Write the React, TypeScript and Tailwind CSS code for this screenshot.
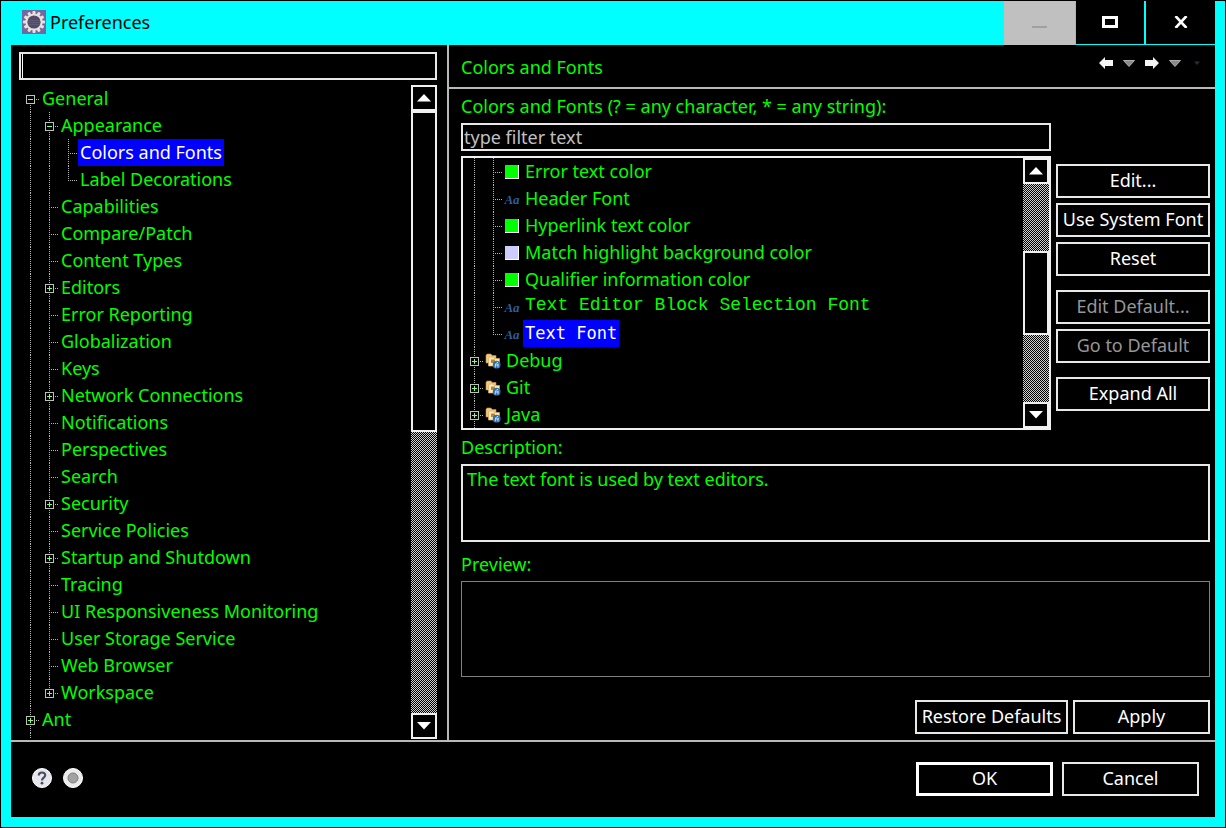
import { useState } from "react";
import type { ReactNode } from "react";

type Guide = "line" | "tee" | "end" | "plus" | "lastPlus" | "minus" | "root";

type TreeItem = {
  label: string;
  guides: Guide[];
};

const topics: TreeItem[] = [
  { label: "General", guides: ["root"] },
  { label: "Appearance", guides: ["line", "minus"] },
  { label: "Colors and Fonts", guides: ["line", "line", "tee"] },
  { label: "Label Decorations", guides: ["line", "line", "end"] },
  { label: "Capabilities", guides: ["line", "tee"] },
  { label: "Compare/Patch", guides: ["line", "tee"] },
  { label: "Content Types", guides: ["line", "tee"] },
  { label: "Editors", guides: ["line", "plus"] },
  { label: "Error Reporting", guides: ["line", "tee"] },
  { label: "Globalization", guides: ["line", "tee"] },
  { label: "Keys", guides: ["line", "tee"] },
  { label: "Network Connections", guides: ["line", "plus"] },
  { label: "Notifications", guides: ["line", "tee"] },
  { label: "Perspectives", guides: ["line", "tee"] },
  { label: "Search", guides: ["line", "tee"] },
  { label: "Security", guides: ["line", "plus"] },
  { label: "Service Policies", guides: ["line", "tee"] },
  { label: "Startup and Shutdown", guides: ["line", "plus"] },
  { label: "Tracing", guides: ["line", "tee"] },
  { label: "UI Responsiveness Monitoring", guides: ["line", "tee"] },
  { label: "User Storage Service", guides: ["line", "tee"] },
  { label: "Web Browser", guides: ["line", "tee"] },
  { label: "Workspace", guides: ["line", "lastPlus"] },
  { label: "Ant", guides: ["plus"] },
];

type FontItem = TreeItem & {
  icon: "green" | "lavender" | "font" | "folder";
  font?: string;
};

const fontItems: FontItem[] = [
  { label: "Error text color", guides: ["line", "tee"], icon: "green" },
  { label: "Header Font", guides: ["line", "tee"], icon: "font" },
  { label: "Hyperlink text color", guides: ["line", "tee"], icon: "green" },
  { label: "Match highlight background color", guides: ["line", "tee"], icon: "lavender" },
  { label: "Qualifier information color", guides: ["line", "tee"], icon: "green" },
  { label: "Text Editor Block Selection Font", guides: ["line", "tee"], icon: "font", font: "font-['Liberation_Mono',monospace] text-[18px] leading-[22px] pb-1" },
  { label: "Text Font", guides: ["line", "end"], icon: "font", font: "font-['DejaVu_Sans_Mono',monospace] text-[17px]" },
  { label: "Debug", guides: ["plus"], icon: "folder" },
  { label: "Git", guides: ["plus"], icon: "folder" },
  { label: "Java", guides: ["plus"], icon: "folder" },
];

function GuideCell({ kind }: { kind: Guide }) {
  const hasPlus = kind === "plus" || kind === "lastPlus";
  const hasBox = hasPlus || kind === "minus" || kind === "root";
  const top = kind === "root" ? 14 : 0;
  const bottom = kind === "end" || kind === "lastPlus" ? 14 : 27;
  return (
    <svg width="19" height="27" viewBox="0 0 19 27" shapeRendering="crispEdges" className="shrink-0" aria-hidden="true">
      <path d={`M9.5 ${top}V${bottom}`} stroke="#b4b4b4" strokeDasharray="1 1" />
      {kind !== "line" && <path d="M9 14.5H19" stroke="#b4b4b4" strokeDasharray="1 1" />}
      {hasBox && (
        <>
          <rect x="5.5" y="10.5" width="8" height="8" fill="#000" stroke="#b8c4b8" />
          <path d="M7 14.5H12" stroke="#7dff7d" />
          {hasPlus && <path d="M9.5 12V17" stroke="#7dff7d" />}
        </>
      )}
    </svg>
  );
}

type TreeRowProps = {
  item: TreeItem;
  selected: boolean;
  onSelect: () => void;
  icon?: ReactNode;
  font?: string;
};

function TreeRow({ item, selected, onSelect, icon, font = "" }: TreeRowProps) {
  return (
    <li role="treeitem" aria-selected={selected} className="flex h-[27px] items-stretch">
      {item.guides.map((kind, i) => (
        <GuideCell key={i} kind={kind} />
      ))}
      {icon && <span className="flex w-5 shrink-0 items-center justify-center pr-0.5">{icon}</span>}
      <button onClick={onSelect} className={`whitespace-nowrap px-0.5 text-left ${font} ${selected ? "bg-[#0000ff] text-white" : "text-[#00ff00]"}`}>
        {item.label}
      </button>
    </li>
  );
}

function ItemIcon({ kind }: { kind: FontItem["icon"] }) {
  if (kind === "font") {
    return <span aria-hidden="true" className="pt-0.5 font-['Liberation_Serif',serif] text-[13px] leading-none font-bold italic text-[#2c5f9e]">Aa</span>;
  }
  if (kind === "folder") {
    return (
      <svg width="16" height="16" viewBox="0 0 16 16" aria-hidden="true">
        <path d="M1 2.5 2 1h4l1 1.5h4V10H1z" fill="#f0c987" stroke="#c98f3a" strokeWidth=".6" />
        <path d="M3.500 5.500 4.500 4H8.500l1 1.500h5V13H3.500z" fill="#fdebbc" stroke="#d6a65c" strokeWidth=".7" />
        <rect x="6" y="6.500" width="4" height="3.500" fill="#b98531" />
        <circle cx="11.700" cy="11.700" r="3.900" fill="#2f6fae" />
        <path d="M10.200 14.500c0-3 .8-5 3-5.300M10 12h3.500M13 10.500v4" stroke="#d5e8fa" strokeWidth=".9" fill="none" />
      </svg>
    );
  }
  return <span className={`size-[14px] border-r border-b border-white ${kind === "green" ? "bg-[#00ff00]" : "bg-[#ccccff]"}`} />;
}

function Arrow({ down = false }: { down?: boolean }) {
  return (
    <svg width="14" height="8" viewBox="0 0 14 8" className="fill-white" aria-hidden="true">
      <path d={down ? "M0 0H14L7 7.500z" : "M0 7.500H14L7 0z"} />
    </svg>
  );
}

function Track({ className = "" }: { className?: string }) {
  return <div className={`bg-[repeating-conic-gradient(#d0d0d0_0_25%,#000_0_50%)] bg-[length:2px_2px] ${className}`} />;
}

function ScrollBar({ before, thumb, after }: { before: string; thumb: string; after: string }) {
  const button = "flex h-[26px] shrink-0 items-center justify-center border-2 border-[#f0f0f0] bg-black";
  return (
    <div className="flex w-[26px] shrink-0 flex-col">
      <button aria-label="Scroll up" className={button}>
        <Arrow />
      </button>
      <Track className={before} />
      <div className={`border-2 border-[#f0f0f0] bg-black ${thumb}`} />
      <Track className={after} />
      <button aria-label="Scroll down" className={button}>
        <Arrow down />
      </button>
    </div>
  );
}

type PushButtonProps = {
  children: ReactNode;
  className?: string;
  disabled?: boolean;
};

function PushButton({ children, className = "border-2 border-[#e8e8e8]", disabled = false }: PushButtonProps) {
  return (
    <button disabled={disabled} className={`flex h-[34px] items-center justify-center bg-black pb-0.5 whitespace-nowrap text-white disabled:text-[#969696] ${className}`}>
      {children}
    </button>
  );
}

function EclipseIcon() {
  const teeth = Array.from({ length: 12 }, (_, i) => i * 30);
  return (
    <svg width="24" height="24" viewBox="0 0 24 24" aria-hidden="true">
      <rect width="24" height="24" fill="#7468a0" />
      {teeth.map((angle) => (
        <rect key={angle} x="10.500" y="1" width="3" height="4" rx=".8" fill="#e8e2dc" transform={`rotate(${angle} 12 12)`} />
      ))}
      <circle cx="12" cy="12" r="7.600" fill="#514b66" stroke="#e8e2dc" strokeWidth="2" />
      <path d="M6 10.500h12M5.500 12.500h13M6 14.500h12" stroke="#625d7a" strokeWidth=".8" />
    </svg>
  );
}

function TitleBar() {
  return (
    <header className="flex h-[44px] items-stretch bg-[#00ffff]">
      <div className="flex flex-1 items-center gap-1 pb-0.5 pl-[21px] text-black">
        <EclipseIcon />
        <h1>Preferences</h1>
      </div>
      <div className="mr-[10px] mb-px flex gap-0.5">
        <button disabled aria-label="Minimize" className="-mb-px flex w-[71px] items-center justify-center bg-[#c0c0c0]">
          <span className="mt-2 h-0.5 w-[15px] bg-[#a0a0a0]" />
        </button>
        <button aria-label="Maximize" className="-ml-px flex w-[68px] items-center justify-center bg-black pb-0.5">
          <span className="h-3 w-4 border-3 border-white" />
        </button>
        <button aria-label="Close" className="flex w-[69px] items-center justify-center bg-black pb-0.5">
          <svg width="14" height="12" viewBox="0 0 14 12" stroke="#fff" strokeWidth="2.600" aria-hidden="true">
            <path d="M1.500 0 12.500 12M12.500 0 1.500 12" />
          </svg>
        </button>
      </div>
    </header>
  );
}

function HistoryArrow({ forward = false }: { forward?: boolean }) {
  return (
    <svg width="14" height="12" viewBox="0 0 14 12" aria-hidden="true">
      <path d={forward ? "M14 6 8 0V3H0V9H8V12z" : "M0 6 6 0V3H14V9H6V12z"} fill="#f4f4f4" />
    </svg>
  );
}

function MenuArrow({ faint = false }: { faint?: boolean }) {
  return (
    <svg width="12" height="7" viewBox="0 0 12 7" aria-hidden="true">
      {faint ? (
        <path d="M3 1.500H9L6 5z" fill="#2c2c3a" />
      ) : (
        <path d="M.5 .5H11.500L6 6.500z" fill="#8a8a8a" stroke="#c8c8c8" strokeWidth=".8" />
      )}
    </svg>
  );
}

function PageHeader() {
  return (
    <div className="flex h-[44px] items-center justify-between border-b-2 border-[#b8b8b8] px-3">
      <h2 className="pt-0.5">Colors and Fonts</h2>
      <div className="flex items-center gap-[10px] pb-1.5">
        <button aria-label="Back"><HistoryArrow /></button>
        <button aria-label="Back history"><MenuArrow /></button>
        <button aria-label="Forward"><HistoryArrow forward /></button>
        <button aria-label="Forward history"><MenuArrow /></button>
        <button aria-label="View menu"><MenuArrow faint /></button>
      </div>
    </div>
  );
}

export default function App() {
  const [topic, setTopic] = useState("Colors and Fonts");
  const [fontItem, setFontItem] = useState("Text Font");

  return (
    <div className="flex min-h-screen flex-col border border-black bg-[#00ffff] font-['Noto_Sans','Open_Sans',sans-serif] text-[18px] leading-[27px] text-[#00ff00]">
      <TitleBar />
      <div className="mx-[10px] mb-[10px] flex flex-1 flex-col bg-black">
        <main className="flex border-b-2 border-[#b8b8b8]">
          {/* Topics */}
          <nav className="flex w-[438px] shrink-0 flex-col border-r-2 border-[#b8b8b8] pt-[7px] pr-[10px] pb-px pl-2">
            <div className="relative mb-[5px]">
              <input aria-label="Filter topics" className="block h-7 w-full border-2 border-[#e8e8e8] bg-black px-1 text-white outline-none" />
              <span className="absolute top-0.5 left-[3px] h-6 w-px bg-white" />
            </div>
            <div className="flex flex-1">
              <div className="min-w-0 flex-1 pl-0.5">
                <ul role="tree" aria-label="Topics">
                  {topics.map((item) => (
                    <TreeRow key={item.label} item={item} selected={item.label === topic} onSelect={() => setTopic(item.label)} />
                  ))}
                </ul>
                <div className="h-1.5 overflow-hidden">
                  <GuideCell kind="line" />
                </div>
              </div>
              <ScrollBar before="h-0" thumb="h-[321px]" after="flex-1" />
            </div>
          </nav>

          {/* Page */}
          <section className="flex min-w-0 flex-1 flex-col">
            <PageHeader />
            <div className="flex flex-1 flex-col pr-[5px] pb-1.5 pl-3">
              <label htmlFor="font-filter" className="pt-1">Colors and Fonts (? = any character, * = any string):</label>
              <div className="flex gap-[5px] pt-[3px]">
                <div className="flex min-w-0 flex-1 flex-col gap-[5px]">
                  <input id="font-filter" placeholder="type filter text" className="block h-7 w-full border-2 border-[#e8e8e8] bg-black px-px text-white outline-none placeholder:text-[#c0c0c0]" />
                  <div className="flex border-2 border-[#f0f0f0]">
                    <ul role="tree" aria-label="Colors and fonts" className="min-w-0 flex-1 overflow-hidden pl-0.5">
                      {fontItems.map((item) => (
                        <TreeRow
                          key={item.label}
                          item={item}
                          icon={<ItemIcon kind={item.icon} />}
                          font={item.font}
                          selected={item.label === fontItem}
                          onSelect={() => setFontItem(item.label)}
                        />
                      ))}
                    </ul>
                    <ScrollBar before="flex-1" thumb="h-[84px]" after="flex-1" />
                  </div>
                </div>
                <div className="flex w-[154px] shrink-0 flex-col gap-[5px] pt-[41px]">
                  <PushButton>Edit...</PushButton>
                  <PushButton>Use System Font</PushButton>
                  <PushButton>Reset</PushButton>
                  <PushButton disabled className="mt-[9px] border-2 border-[#e8e8e8]">Edit Default...</PushButton>
                  <PushButton disabled>Go to Default</PushButton>
                  <PushButton className="mt-[9px] border-2 border-[#e8e8e8]">Expand All</PushButton>
                </div>
              </div>

              <label htmlFor="description" className="pt-1 pb-[3px]">Description:</label>
              <textarea id="description" readOnly value="The text font is used by text editors." className="block h-[78px] w-full resize-none border-2 border-[#e8e8e8] bg-black px-1 outline-none" />
              <h3 className="pt-[9px] pb-[3px]">Preview:</h3>
              <div className="h-24 border border-[#808080]" />

              <div className="mt-auto flex justify-end gap-[5px]">
                <PushButton className="w-[153px] border-2 border-[#e8e8e8]">Restore Defaults</PushButton>
                <PushButton className="w-[137px] border-2 border-[#e8e8e8]">Apply</PushButton>
              </div>
            </div>
          </section>
        </main>

        <footer className="flex flex-1 items-center justify-between pr-4 pb-px pl-[21px]">
          <div className="flex items-center gap-[11px] pb-0.5">
            <button aria-label="Help">
              <svg width="20" height="20" viewBox="0 0 20 20" aria-hidden="true">
                <circle cx="10" cy="10" r="9.500" fill="#e6e6ee" stroke="#fff" />
                <path d="M6.800 7.400C6.800 3.600 13.200 3.600 13.200 7.200 13.200 9.600 10 9.600 10 12.600" fill="none" stroke="#4a4e5c" strokeWidth="2.200" />
                <circle cx="10" cy="15.200" r="1.400" fill="#4a4e5c" />
              </svg>
            </button>
            <button aria-label="Record preferences">
              <svg width="20" height="20" viewBox="0 0 20 20" aria-hidden="true">
                <circle cx="10" cy="10" r="9.500" fill="#ececec" stroke="#fff" />
                <circle cx="10" cy="10" r="5" fill="#a2a2a2" stroke="#7e7e7e" />
              </svg>
            </button>
          </div>
          <div className="flex gap-[9px]">
            <PushButton className="w-[137px] border-3 border-white">OK</PushButton>
            <PushButton className="w-[137px] border-2 border-[#e8e8e8]">Cancel</PushButton>
          </div>
        </footer>
      </div>
    </div>
  );
}
